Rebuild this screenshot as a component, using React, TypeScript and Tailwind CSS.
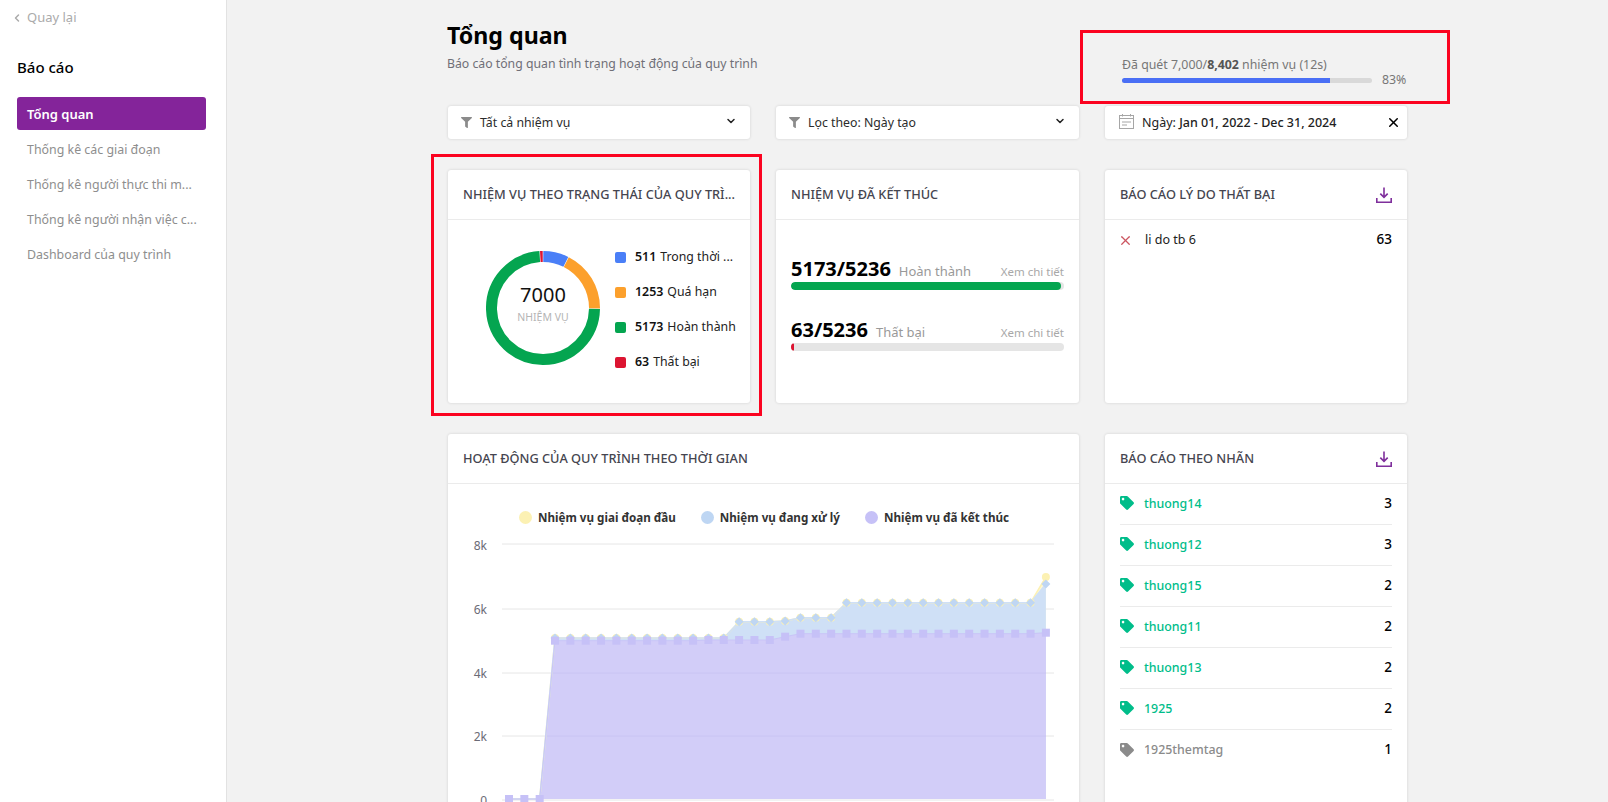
import { ChevronDown, ChevronLeft, X } from "lucide-react";
import { FaFilter, FaTag } from "react-icons/fa";

const navItems = [
  "Tổng quan",
  "Thống kê các giai đoạn",
  "Thống kê người thực thi m...",
  "Thống kê người nhận việc c...",
  "Dashboard của quy trình",
];

const legend = [
  { color: "bg-[#4a7ff7]", value: "511", label: "Trong thời ..." },
  { color: "bg-[#fca02c]", value: "1253", label: "Quá hạn" },
  { color: "bg-[#04a550]", value: "5173", label: "Hoàn thành" },
  { color: "bg-[#dc1431]", value: "63", label: "Thất bại" },
];

const tags = [
  { name: "thuong14", count: 3, on: true },
  { name: "thuong12", count: 3, on: true },
  { name: "thuong15", count: 2, on: true },
  { name: "thuong11", count: 2, on: true },
  { name: "thuong13", count: 2, on: true },
  { name: "1925", count: 2, on: true },
  { name: "1925themtag", count: 1, on: false },
];

// chart data, y values in page pixels
const xAt = (i: number) => 509 + i * 15.34;
const finished = [
  799, 799, 799, 640.7, 640.7, 640.7, 640.7, 640.7, 640.7, 640.7, 640.7, 640.7, 640.7, 640, 640, 640, 640, 640,
  636.7, 633.7, 633.7, 633.7, 633.7, 633.7, 633.7, 633.7, 633.7, 633.7, 633.7, 633.7, 633.7, 633.7, 633.7, 633.7, 633.7,
  632.7,
];
const doing = [
  799, 799, 799, 638, 638, 638, 638, 638, 638, 638, 638, 638, 638, 638, 638, 621.7, 621.7, 621.7, 621, 617.7, 617.7,
  617.7, 602.7, 602.7, 602.7, 602.7, 602.7, 602.7, 602.7, 602.7, 602.7, 602.7, 602.7, 602.7, 602.7, 584,
];
const first = doing.map((y, i) => (i === 35 ? 577 : y));

const toLine = (ys: number[]) => ys.map((y, i) => `${xAt(i)},${y}`).join(" ");
const toArea = (ys: number[]) => `509,799 ${toLine(ys)} ${xAt(35)},799`;

function arc(startDeg: number, endDeg: number) {
  const r = 51.5;
  const c = 57;
  const rad = (d: number) => ((d - 90) * Math.PI) / 180;
  const large = endDeg - startDeg > 180 ? 1 : 0;
  return `M${c + r * Math.cos(rad(startDeg))} ${c + r * Math.sin(rad(startDeg))} A${r} ${r} 0 ${large} 1 ${
    c + r * Math.cos(rad(endDeg))
  } ${c + r * Math.sin(rad(endDeg))}`;
}

function DownloadIcon() {
  return (
    <svg width="16" height="16" viewBox="0 0 16 16" fill="none" stroke="#7f2f9c" strokeWidth="1.6">
      <path d="M8 0.5V10M4.3 6.6L8 10.3L11.7 6.6" />
      <path d="M0.8 11V15.2H15.2V11" />
    </svg>
  );
}

function Card({
  title,
  action,
  className,
  children,
}: {
  title: string;
  action?: boolean;
  className?: string;
  children: React.ReactNode;
}) {
  return (
    <div className={`bg-white rounded-[3px] shadow-[0_0_3px_rgba(0,0,0,0.14)] ${className ?? ""}`}>
      <div className="h-[50px] px-[15px] border-b border-[#ebebeb] flex items-center justify-between">
        <span className="text-[12.75px] font-medium text-[#45454f] whitespace-nowrap">{title}</span>
        {action && <DownloadIcon />}
      </div>
      {children}
    </div>
  );
}

function SelectBox({ label }: { label: string }) {
  return (
    <div className="h-[33px] bg-white rounded-[3px] shadow-[0_0_3px_rgba(0,0,0,0.14)] flex items-center pl-[13px] pr-[13px]">
      <FaFilter className="text-[#8b8b8b] w-[11px] h-[11px]" />
      <span className="ml-[8px] pt-[2px] text-[12.3px] text-[#2b2b2b] flex-1">{label}</span>
      <ChevronDown className="w-[12px] h-[12px] text-[#222] -mt-[3px]" strokeWidth={3} />
    </div>
  );
}

function Stat({ value, label, percent, color }: { value: string; label: string; percent: string; color: string }) {
  return (
    <div>
      <div className="h-[28px] pt-[1px] flex items-baseline justify-between">
        <div className="flex items-baseline gap-[8px]">
          <span className="text-[20px] leading-[27px] font-bold text-black">{value}</span>
          <span className="text-[13px] text-[#999]">{label}</span>
        </div>
        <span className="text-[11.5px] text-[#a8a8a8]">Xem chi tiết</span>
      </div>
      <div className="h-[8px] rounded-[4px] bg-[#e5e5e5] overflow-hidden">
        <div className={`h-full rounded-[4px] ${percent} ${color}`} />
      </div>
    </div>
  );
}

export default function App() {
  return (
    <div className="relative h-screen overflow-hidden flex bg-[#f2f2f2] font-['Noto_Sans',sans-serif]">
      {/* SIDEBAR */}
      <aside className="w-[227px] shrink-0 bg-white border-r border-[#e2e2e2] px-[17px]">
        <div className="h-[36px] flex items-center text-[13px] text-[#ababab]">
          <ChevronLeft className="w-[12px] h-[12px] -ml-[6px] mr-[4px]" strokeWidth={3} />
          Quay lại
        </div>
        <h2 className="mt-[19px] text-[15px] font-medium text-black leading-[24px]">Báo cáo</h2>
        <nav className="mt-[18px] w-[189px]">
          {navItems.map((item, i) => (
            <div
              key={item}
              className={`h-[33px] mb-[2px] px-[10px] flex items-center rounded-[3px] whitespace-nowrap ${
                i === 0 ? "pt-[2px] bg-[#84249a] text-white font-semibold text-[13px]" : "pt-[4px] text-[#8e8e8e] text-[12.4px]"
              }`}
            >
              {item}
            </div>
          ))}
        </nav>
      </aside>

      {/* CONTENT */}
      <main className="flex-1 pl-[221px] pt-[19px]">
        <div className="w-[959px]">
          <div className="h-[87px] flex justify-between">
            <div className="-ml-[1px]">
              <h1 className="text-[23.2px] leading-[32px] font-bold text-black">Tổng quan</h1>
              <p className="mt-[4px] text-[12.25px] text-[#6f6f77]">Báo cáo tổng quan tình trạng hoạt động của quy trình</p>
            </div>
            <div className="w-[302px] pl-[17px] pt-[37px] text-[12.35px] text-[#777]">
              <div className="leading-[18px]">
                Đã quét 7,000/<b className="font-bold text-[#555]">8,402</b> nhiệm vụ (12s)
              </div>
              <div className="flex items-center -mt-[3px]">
                <div className="w-[250px] h-[5px] rounded-full bg-[#d9d9d9] overflow-hidden">
                  <div className="h-full w-[83%] bg-[#4a6ff5]" />
                </div>
                <span className="ml-[10px]">83%</span>
              </div>
            </div>
          </div>

          {/* FILTERS */}
          <div className="grid grid-cols-[302px_303px_302px] gap-x-[26px]">
            <SelectBox label="Tất cả nhiệm vụ" />
            <SelectBox label="Lọc theo: Ngày tạo" />
            <div className="h-[33px] bg-white rounded-[3px] shadow-[0_0_3px_rgba(0,0,0,0.14)] flex items-center pl-[14px] pr-[6px]">
              <svg width="15" height="15" viewBox="0 0 15 15" fill="none" stroke="#a6a6a6" className="-mt-[3px]">
                <rect x="0.5" y="1.5" width="14" height="13" />
                <path d="M0.5 4.5H14.5M3.5 0V2.5M11.5 0V2.5M3 8H12M3 11H8" />
              </svg>
              <span className="ml-[8px] pt-[2px] text-[12.5px] font-medium text-[#222] flex-1">
                <span className="font-normal">Ngày:</span> Jan 01, 2022 - Dec 31, 2024
              </span>
              <X className="w-[15px] h-[15px] text-black" strokeWidth={2.4} />
            </div>
          </div>

          {/* ROW 1 */}
          <div className="mt-[31px] grid grid-cols-[302px_303px_302px] gap-x-[26px]">
            <Card title="NHIỆM VỤ THEO TRẠNG THÁI CỦA QUY TRÌ..." className="h-[233px]">
              <div className="h-[183px] pl-[38px] pb-[8px] flex items-center">
                <div className="relative w-[114px] h-[114px]">
                  <svg width="114" height="114" viewBox="0 0 114 114" fill="none" strokeWidth="11">
                    <path d={arc(0.3, 26.3)} stroke="#4a7ff7" />
                    <path d={arc(26.9, 90.4)} stroke="#fca02c" />
                    <path d={arc(91, 356.4)} stroke="#04a550" />
                    <path d={arc(357, 359.7)} stroke="#dc1431" />
                  </svg>
                  <div className="absolute inset-0 flex flex-col items-center pt-[30px]">
                    <span className="text-[20px] leading-[28px] text-[#111]">7000</span>
                    <span className="text-[10.5px] leading-[16px] text-[#b5b5b5]">NHIỆM VỤ</span>
                  </div>
                </div>
                <div className="ml-[15px] mt-[4px]">
                  {legend.map((l) => (
                    <div key={l.value} className="h-[35px] flex items-center whitespace-nowrap">
                      <span className={`shrink-0 w-[11px] h-[11px] rounded-[2px] ${l.color}`} />
                      <span className="ml-[9px] text-[12.4px] font-semibold text-[#111]">{l.value}</span>
                      <span className="ml-[4px] text-[12.3px] text-[#222]">{l.label}</span>
                    </div>
                  ))}
                </div>
              </div>
            </Card>

            <Card title="NHIỆM VỤ ĐÃ KẾT THÚC" className="h-[233px]">
              <div className="px-[15px] pt-[34px] flex flex-col gap-[25px]">
                <Stat value="5173/5236" label="Hoàn thành" percent="w-[98.8%]" color="bg-[#04a550]" />
                <Stat value="63/5236" label="Thất bại" percent="w-[1.2%]" color="bg-[#dc1431]" />
              </div>
            </Card>

            <Card title="BÁO CÁO LÝ DO THẤT BẠI" action className="h-[233px]">
              <div className="h-[40px] px-[15px] flex items-center">
                <X className="w-[15px] h-[15px] -ml-[2px] text-[#cc5560]" strokeWidth={2} />
                <span className="ml-[12px] text-[12.5px] text-[#222] flex-1">li do tb 6</span>
                <span className="-mt-[2px] text-[13.5px] font-medium text-black">63</span>
              </div>
            </Card>
          </div>

          {/* ROW 2 */}
          <div className="mt-[31px] grid grid-cols-[631px_302px] gap-x-[26px]">
            <Card title="HOẠT ĐỘNG CỦA QUY TRÌNH THEO THỜI GIAN" className="h-[420px]">
              <div className="h-[46px] pl-[71px] pt-[21px] flex items-center text-[11.65px] font-bold text-[#333]">
                <span className="w-[13px] h-[13px] rounded-full bg-[#fcf1b3]" />
                <span className="ml-[6px]">Nhiệm vụ giai đoạn đầu</span>
                <span className="ml-[25px] w-[13px] h-[13px] rounded-full bg-[#bed6f3]" />
                <span className="ml-[6px]">Nhiệm vụ đang xử lý</span>
                <span className="ml-[25px] w-[13px] h-[13px] rounded-full bg-[#c6c1f7]" />
                <span className="ml-[6px]">Nhiệm vụ đã kết thúc</span>
              </div>
              <svg width="631" height="280" viewBox="448 530 631 280" className="block">
                {[544, 609, 673, 736, 800].map((y) => (
                  <line key={y} x1="502" x2="1054" y1={y} y2={y} stroke="#e6e6e6" />
                ))}
                {[
                  ["8k", 550],
                  ["6k", 614],
                  ["4k", 678],
                  ["2k", 741],
                  ["0", 805],
                ].map(([t, y]) => (
                  <text key={t} x="487" y={y} textAnchor="end" fontSize="12" fill="#6b6b76">
                    {t}
                  </text>
                ))}

                <polygon points={toArea(first)} fill="#fdf3b5" fillOpacity="0.55" />
                <polygon points={toArea(doing)} fill="#cfe0f6" />
                <polygon points={toArea(finished)} fill="#d2cdf8" />
                <line x1="552" x2="1046" y1="673" y2="673" stroke="#c6c0f0" strokeOpacity="0.6" />
                <line x1="546" x2="1046" y1="736" y2="736" stroke="#c6c0f0" strokeOpacity="0.6" />

                <polyline points={toLine(first)} fill="none" stroke="#fcf1b3" strokeWidth="1.5" />
                <polyline points={toLine(doing)} fill="none" stroke="#cfe0f6" strokeWidth="1.5" />
                <polyline points={toLine(finished)} fill="none" stroke="#c9c4f7" strokeWidth="1" />

                {first.map((y, i) =>
                  y < 799 ? <circle key={i} cx={xAt(i)} cy={y} r="4" fill="#fcf1b3" /> : null,
                )}
                {doing.map((y, i) =>
                  y < 799 ? (
                    <path
                      key={i}
                      d={`M${xAt(i)} ${y - 4.5}L${xAt(i) + 4.5} ${y}L${xAt(i)} ${y + 4.5}L${xAt(i) - 4.5} ${y}Z`}
                      fill="#bfd6f3"
                    />
                  ) : null,
                )}
                {finished.map((y, i) => (
                  <rect key={i} x={xAt(i) - 4} y={y - 4} width="8" height="8" fill="#c6c1f7" />
                ))}
              </svg>
            </Card>

            <Card title="BÁO CÁO THEO NHÃN" action className="h-[420px]">
              <div className="px-[15px]">
                {tags.map((t, i) => (
                  <div
                    key={t.name}
                    className={`h-[41px] flex items-center ${i < tags.length - 1 ? "border-b border-[#ebebeb]" : ""}`}
                  >
                    <FaTag className={`w-[14px] h-[14px] -mt-[2px] ${t.on ? "text-[#00bd8a]" : "text-[#8b8b8b]"}`} />
                    <span className={`ml-[10px] flex-1 text-[12.4px] font-medium ${t.on ? "text-[#00bd8a]" : "text-[#8b8b8b]"}`}>
                      {t.name}
                    </span>
                    <span className="-mt-[2px] text-[13.5px] font-medium text-black">{t.count}</span>
                  </div>
                ))}
              </div>
            </Card>
          </div>
        </div>
      </main>

      {/* annotation boxes drawn over the screenshot */}
      <div className="absolute left-[1080px] top-[30px] w-[370px] h-[74px] border-[3px] border-[#fb0320] pointer-events-none" />
      <div className="absolute left-[431px] top-[154px] w-[331px] h-[262px] border-[3px] border-[#fb0320] pointer-events-none" />
    </div>
  );
}
